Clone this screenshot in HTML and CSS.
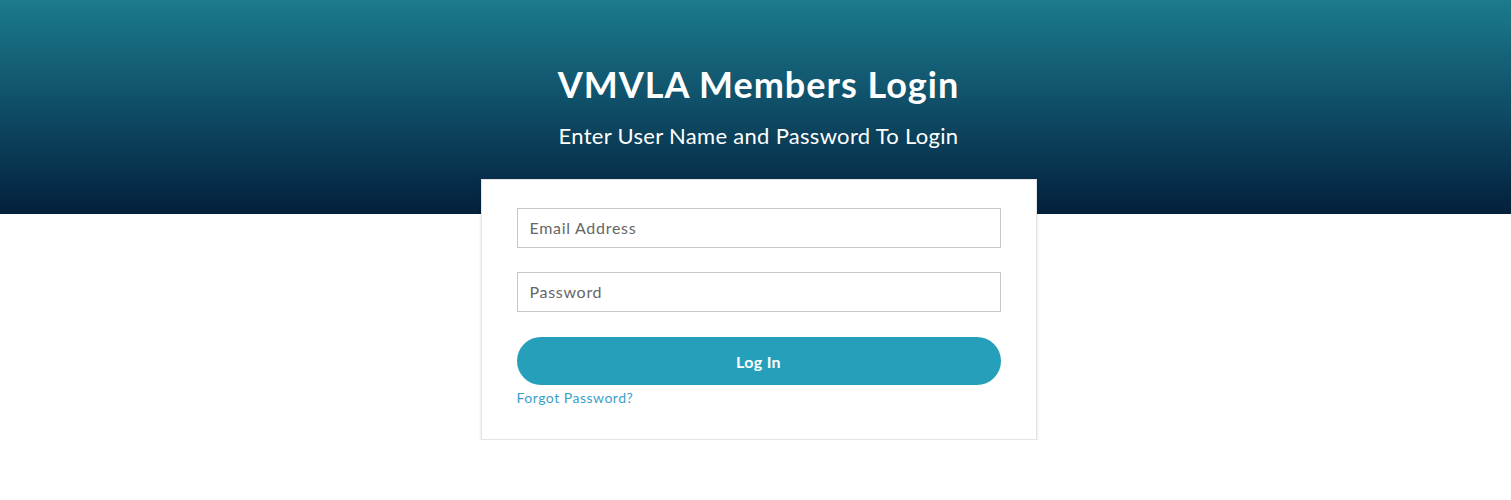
FILE: index.html
```html
<!DOCTYPE html>
<html lang="en">
<head>
	<meta charset="UTF-8">
	<meta name="viewport" content="width=device-width, initial-scale=1.0">
	<title>VMVLA Members Login</title>
	<link rel="stylesheet" href="styles.css">
</head>
<body>
	<div class="banner">
		<h1 class="banner-title">VMVLA Members Login</h1>
		<p class="banner-sub">Enter User Name and Password To Login</p>
	</div>
	<div class="login-wrap">
		<form class="login-card">
			<input class="field" type="email" placeholder="Email Address">
			<input class="field" type="password" placeholder="Password">
			<button class="login-btn" type="button">Log In</button>
			<a class="forgot" href="#">Forgot Password?</a>
		</form>
	</div>
</body>
</html>
```

FILE: styles.css
```css
body{
	margin: 0;
	font-family: Lato, "Noto Sans", sans-serif;
	background: #fff;
}
.banner{
	height: 214px;
	box-sizing: border-box;
	padding: 62px 0 0 6px;
	text-align: center;
	color: #fff;
	background: linear-gradient(to bottom, #1b7b8c 0%, #0f4d67 50%, #03203c 100%);
}
.banner-title{
	margin: 0;
	font-size: 36px;
	font-weight: 700;
	line-height: 44px;
	letter-spacing: 1px;
}
.banner-sub{
	margin: 16px 0 0 0;
	font-size: 22px;
	line-height: 28px;
	letter-spacing: 0.3px;
}
.login-wrap{
	display: flex;
	justify-content: center;
	margin-top: -35px;
	padding-left: 6px;
}
.login-card{
	width: 556px;
	box-sizing: border-box;
	padding: 28px 35px 32px 35px;
	background: #fff;
	border: solid 1px #e4e4e4;
	box-shadow: 0 2px 3px rgba(0,0,0,0.14);
	display: flex;
	flex-direction: column;
}
.field{
	height: 40px;
	box-sizing: border-box;
	border: solid 1px #c8c8c8;
	border-radius: 0;
	padding: 0 12px 1px 12px;
	font-family: inherit;
	font-size: 16px;
	letter-spacing: 0.7px;
	color: #333;
	margin-bottom: 24px;
	outline: none;
}
.field::placeholder{
	color: #666;
}
.login-btn{
	margin-top: 1px;
	height: 48px;
	border: none;
	border-radius: 24px;
	background: #259fba;
	color: #fff;
	font-family: inherit;
	font-size: 16px;
	font-weight: 700;
	letter-spacing: 0.3px;
	cursor: pointer;
}
.forgot{
	margin-top: 4px;
	align-self: flex-start;
	font-size: 14px;
	line-height: 18px;
	letter-spacing: 0.5px;
	color: #3a9fc7;
	text-decoration: none;
}
```
